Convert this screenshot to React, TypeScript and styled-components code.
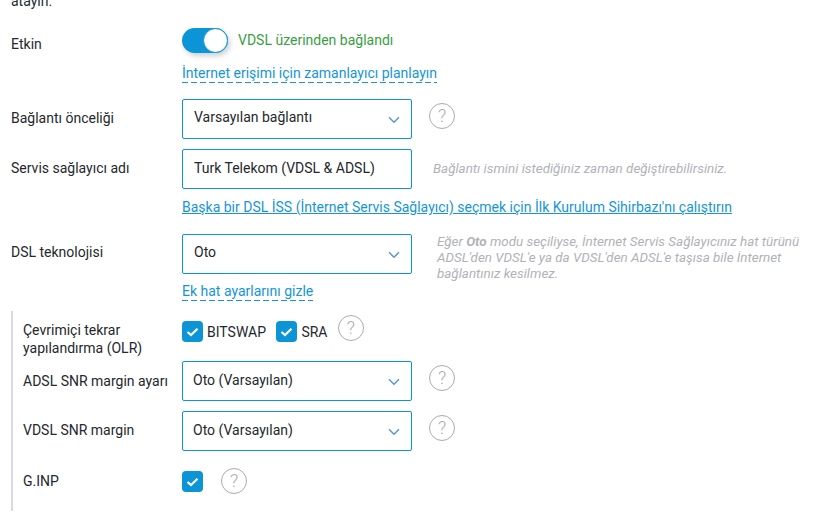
import React from "react";
import styled, { createGlobalStyle } from "styled-components";

const GlobalStyle = createGlobalStyle`
  html, body {
    margin: 0;
    height: 100%;
    overflow: hidden;
    background: #fff;
  }
  body {
    font-family: Roboto, "Liberation Sans", sans-serif;
    font-size: 14px;
    color: #24282d;
  }
`;

const HelpIcon = () => (
  <HelpCircle>?</HelpCircle>
);

const Chevron = () => (
  <ChevronIcon width="12" height="8" viewBox="0 0 12 8" fill="none">
    <path d="M1 1.2 L6 6.2 L11 1.2" stroke="#5b97cf" strokeWidth="1.5" />
  </ChevronIcon>
);

const Check = ({ label }: { label?: string }) => (
  <CheckItem>
    <CheckBox>
      <svg width="13" height="10" viewBox="0 0 13 10" fill="none">
        <path d="M1.5 5 L5 8 L11.5 1.8" stroke="#fff" strokeWidth="2.2" />
      </svg>
    </CheckBox>
    {label && <CheckLabel>{label}</CheckLabel>}
  </CheckItem>
);

export default function App() {
  return (
    <Page>
      <GlobalStyle />
      <Intro>atayın.</Intro>

      <EnableRow>
        <Label $top={7}>Etkin</Label>
        <Value>
          <ToggleLine>
            <Toggle>
              <Knob />
            </Toggle>
            <Status>VDSL üzerinden bağlandı</Status>
          </ToggleLine>
          <DashedLink>İnternet erişimi için zamanlayıcı planlayın</DashedLink>
        </Value>
      </EnableRow>

      <FieldRow $top={16}>
        <Label $top={10}>Bağlantı önceliği</Label>
        <Select>
          Varsayılan bağlantı
          <Chevron />
        </Select>
        <HelpSlot>
          <HelpIcon />
        </HelpSlot>
      </FieldRow>

      <FieldRow $top={10}>
        <Label $top={10}>Servis sağlayıcı adı</Label>
        <TextInput>Turk Telekom (VDSL &amp; ADSL)</TextInput>
        <Note $left={21} $top={12}>
          Bağlantı ismini istediğiniz zaman değiştirebilirsiniz.
        </Note>
      </FieldRow>

      <SolidLinkRow>
        <SolidLink>
          Başka bir DSL İSS (İnternet Servis Sağlayıcı) seçmek için İlk Kurulum Sihirbazı'nı çalıştırın
        </SolidLink>
      </SolidLinkRow>

      <FieldRow $top={18}>
        <Label $top={9}>DSL teknolojisi</Label>
        <Select>
          Oto
          <Chevron />
        </Select>
        <Note $left={25} $top={0}>
          Eğer <b>Oto</b> modu seçiliyse, İnternet Servis Sağlayıcınız hat türünü
          <br />
          ADSL'den VDSL'e ya da VDSL'den ADSL'e taşısa bile İnternet
          <br />
          bağlantınız kesilmez.
        </Note>
      </FieldRow>

      <DashedRow>
        <DashedLink>Ek hat ayarlarını gizle</DashedLink>
      </DashedRow>

      <Advanced>
        <OlrRow>
          <SubLabel $top={0}>
            Çevrimiçi tekrar
            <br />
            yapılandırma (OLR)
          </SubLabel>
          <Check label="BITSWAP" />
          <Check label="SRA" />
          <OlrHelp>
            <HelpIcon />
          </OlrHelp>
        </OlrRow>

        <SubRow $top={0}>
          <SubLabel $top={11}>ADSL SNR margin ayarı</SubLabel>
          <SubSelect>
            Oto (Varsayılan)
            <Chevron />
          </SubSelect>
          <HelpSlot>
            <HelpIcon />
          </HelpSlot>
        </SubRow>

        <SubRow $top={10}>
          <SubLabel $top={10}>VDSL SNR margin</SubLabel>
          <SubSelect>
            Oto (Varsayılan)
            <Chevron />
          </SubSelect>
          <HelpSlot>
            <HelpIcon />
          </HelpSlot>
        </SubRow>

        <GinpRow>
          <SubLabel $top={1}>G.INP</SubLabel>
          <Check />
          <GinpHelp>
            <HelpIcon />
          </GinpHelp>
        </GinpRow>
      </Advanced>
    </Page>
  );
}

const Page = styled.div`
  width: 832px;
  margin-top: -7px;
  padding-left: 11px;
  box-sizing: border-box;
`;

const Intro = styled.div`
  line-height: 16px;
  height: 16px;
`;

const EnableRow = styled.div`
  display: flex;
  margin-top: 19px;
`;

const Label = styled.div<{ $top: number }>`
  width: 171px;
  flex: none;
  line-height: 18px;
  align-self: flex-start;
  margin-top: ${(p) => p.$top}px;
`;

const Value = styled.div`
  display: flex;
  flex-direction: column;
  align-items: flex-start;
`;

const ToggleLine = styled.div`
  display: flex;
  align-items: flex-start;
  gap: 10px;
`;

const Toggle = styled.div`
  width: 46px;
  height: 25px;
  border-radius: 13px;
  background: #0b94d6;
  box-shadow: 2px 3px 5px rgba(60, 70, 90, 0.25);
  position: relative;
`;

const Knob = styled.span`
  position: absolute;
  right: 0;
  top: 0;
  width: 25px;
  height: 25px;
  box-sizing: border-box;
  border-radius: 50%;
  background: #fff;
  border: 1px solid #0b94d6;
`;

const Status = styled.span`
  color: #3a9e3f;
  line-height: 24px;
`;

const DashedLink = styled.a`
  color: #1596d8;
  line-height: 18px;
  margin-top: 11px;
  background-image: linear-gradient(to right, #1596d8 0 6px, transparent 6px 9px);
  background-size: 9px 1px;
  background-repeat: repeat-x;
  background-position: 0 100%;
  height: 19px;
  display: inline-block;
`;

const FieldRow = styled.div<{ $top: number }>`
  display: flex;
  align-items: flex-start;
  margin-top: ${(p) => p.$top}px;
`;

const ChevronIcon = styled.svg`
  margin-top: 7px;
`;

const Select = styled.div`
  width: 230px;
  height: 40px;
  flex: none;
  box-sizing: border-box;
  border: 1px solid #0b94d6;
  border-radius: 2px;
  padding: 0 11px 5px;
  display: flex;
  align-items: center;
  justify-content: space-between;
  line-height: 18px;
  color: #24282d;
  background: #fff;
`;

const TextInput = styled(Select)`
  padding-bottom: 3px;
`;

const SubSelect = styled(Select)`
  padding: 0 11px 3px 10px;
  ${ChevronIcon} {
    margin-top: 5px;
  }
`;

const HelpSlot = styled.div`
  margin: 4px 0 0 17px;
`;

const HelpCircle = styled.div`
  width: 26px;
  height: 26px;
  box-sizing: border-box;
  border: 1px solid #a9abad;
  border-radius: 50%;
  color: #a9abad;
  font-size: 18px;
  font-weight: 300;
  line-height: 24px;
  text-align: center;
`;

const Note = styled.div<{ $left: number; $top: number }>`
  margin-left: ${(p) => p.$left}px;
  margin-top: ${(p) => p.$top}px;
  font-size: 13.4px;
  font-style: italic;
  line-height: 16px;
  color: #b0b2b8;
  white-space: nowrap;
  b {
    font-weight: 700;
  }
`;

const SolidLinkRow = styled.div`
  margin: 9px 0 0 171px;
  line-height: 18px;
`;

const SolidLink = styled.a`
  color: #1596d8;
  text-decoration: underline;
`;

const DashedRow = styled.div`
  margin-left: 171px;
  margin-top: -11px;
  height: 40px;
`;

const Advanced = styled.div`
  border-left: 2px solid #d6dae4;
  padding-left: 10px;
  height: 200px;
  box-sizing: border-box;
`;

const SubLabel = styled.div<{ $top: number }>`
  width: 159px;
  flex: none;
  line-height: 18px;
  color: #24282d;
  margin-top: ${(p) => p.$top}px;
`;

const OlrRow = styled.div`
  display: flex;
  align-items: flex-start;
  padding-top: 10px;
  height: 50px;
  box-sizing: border-box;
`;

const SubRow = styled.div<{ $top: number }>`
  display: flex;
  align-items: flex-start;
  margin-top: ${(p) => p.$top}px;
`;

const CheckItem = styled.label`
  display: flex;
  align-items: center;
  gap: 4px;
  margin-right: 10.4px;
  height: 21px;
`;

const CheckBox = styled.span`
  width: 21px;
  height: 21px;
  flex: none;
  border-radius: 4px;
  background: #0b94d6;
  display: flex;
  align-items: center;
  justify-content: center;
`;

const CheckLabel = styled.span`
  line-height: 18px;
`;

const OlrHelp = styled.div`
  margin-top: -6px;
`;

const GinpRow = styled.div`
  display: flex;
  align-items: flex-start;
  margin-top: 20px;
`;

const GinpHelp = styled.div`
  margin: -3px 0 0 7.6px;
`;
